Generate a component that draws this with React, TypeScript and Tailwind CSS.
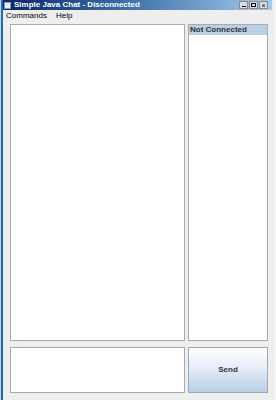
export default function App() {
  return (
    <div className="flex h-[400px] w-[276px] bg-[#eeeeee] font-['Liberation_Sans',Arial,sans-serif]">
      <div className="w-[1px] bg-[#c9d6e6]" />
      <div className="w-[2px] bg-[#1d6cb8]" />
      <div className="flex min-w-0 flex-1 flex-col">
        <div className="flex h-[10px] items-center bg-[linear-gradient(90deg,#0a246a_0%,#3a6ea5_45%,#a6caf0_100%)] pr-[4px]">
          <div className="ml-[1px] mr-[3px] h-[7px] w-[7px] border border-[#7aa0d0] bg-[#e8eef8]" />
          <span className="text-[8px] font-bold leading-none text-white">Simple Java Chat - Disconnected</span>
          <div className="ml-auto flex gap-[1px]">
            <div className="flex h-[8px] w-[9px] items-end justify-center border border-[#888] bg-[#dcdcdc] pb-[1px]">
              <div className="h-[1px] w-[4px] bg-black" />
            </div>
            <div className="flex h-[8px] w-[9px] items-center justify-center border border-[#888] bg-[#dcdcdc]">
              <div className="h-[4px] w-[5px] border border-black" />
            </div>
            <div className="flex h-[8px] w-[9px] items-center justify-center border border-[#888] bg-[#dcdcdc] text-[7px] leading-none text-black">
              ×
            </div>
          </div>
        </div>
        <div className="flex h-[12px] items-center gap-[9px] pl-[3px] text-[8px] text-black">
          <span>Commands</span>
          <span>Help</span>
        </div>
        <div className="flex flex-1 flex-col gap-[6px] pb-[7px] pl-[7px] pr-[4px] pt-[2px]">
          <div className="flex flex-1 gap-[3px]">
            <div className="flex-1 border border-[#aaaaaa] bg-white" />
            <div className="w-[80px] border border-[#aaaaaa] bg-white">
              <div className="h-[10px] bg-[#b8cfe5] pl-[1px] text-[8px] font-bold leading-[10px] text-[#333]">Not Connected</div>
            </div>
          </div>
          <div className="flex h-[46px] gap-[3px]">
            <div className="flex-1 border border-[#aaaaaa] bg-white" />
            <div className="flex w-[80px] items-center justify-center border border-[#9aa9bb] bg-[linear-gradient(180deg,#ffffff_0%,#e8eff7_40%,#b9cfe6_100%)] text-[8px] font-bold text-[#333]">
              Send
            </div>
          </div>
        </div>
      </div>
      <div className="w-[3px] bg-[#eeeeee]" />
      <div className="w-[1px] bg-[#f8f8f8]" />
    </div>
  );
}
